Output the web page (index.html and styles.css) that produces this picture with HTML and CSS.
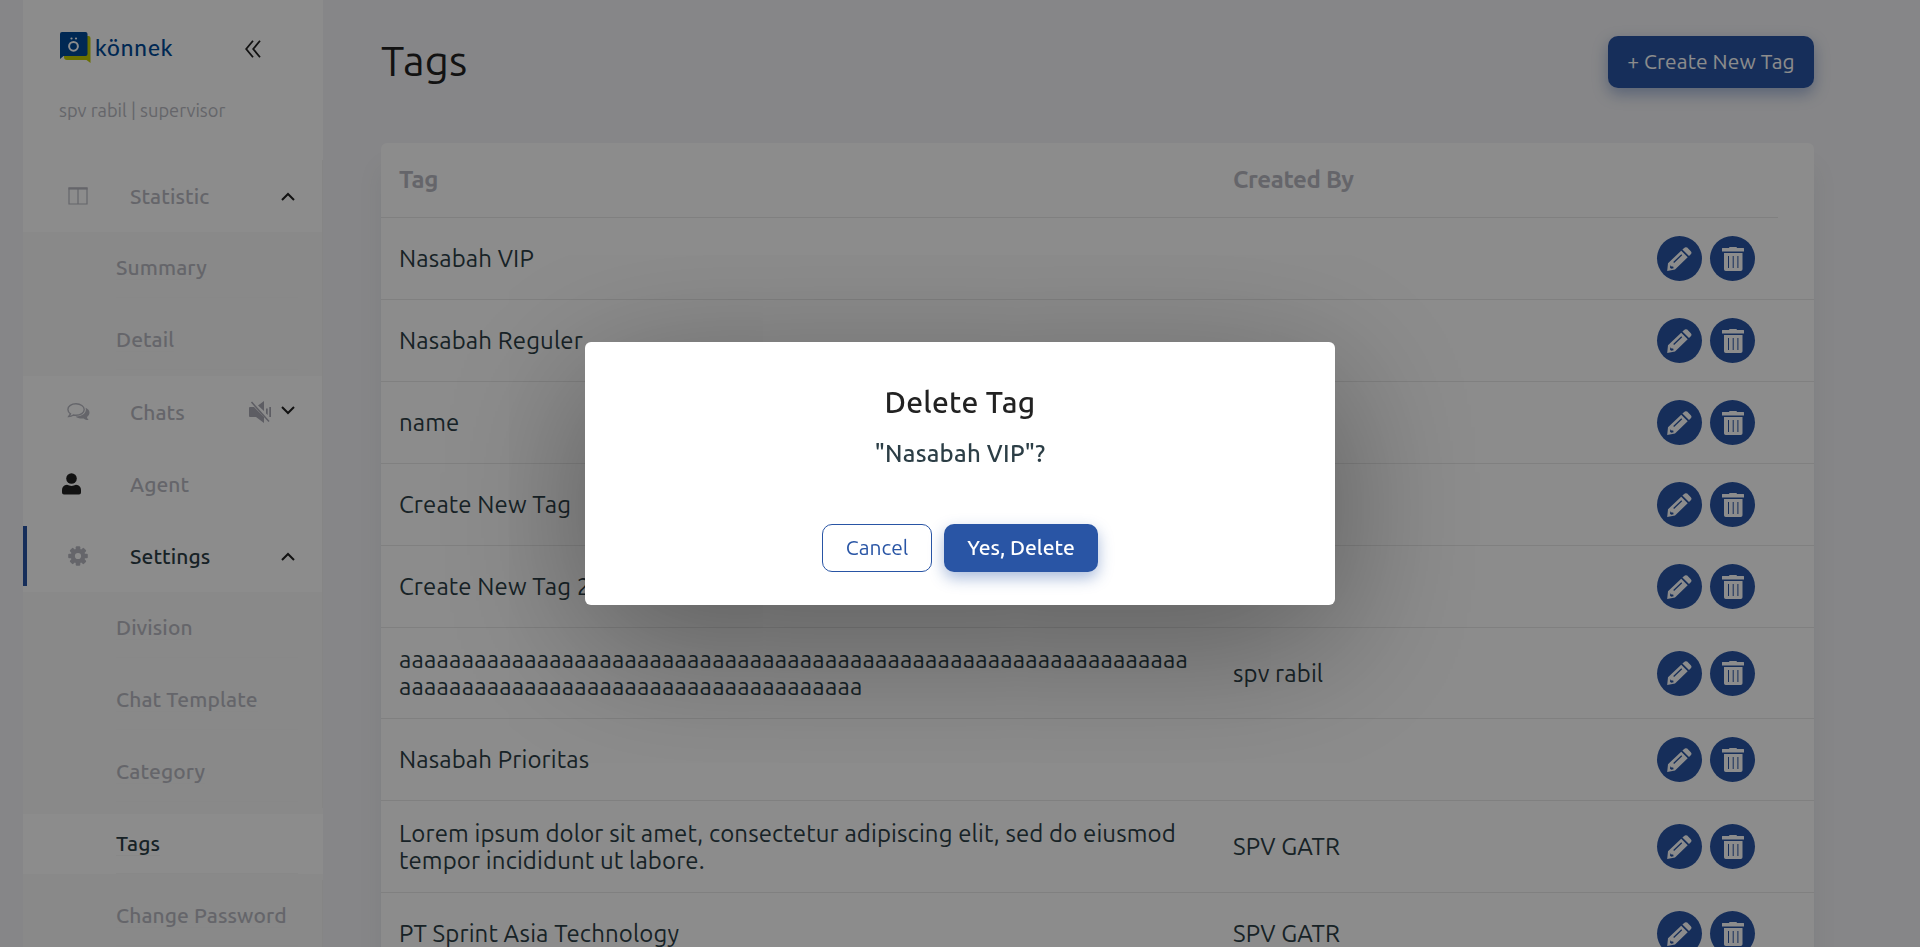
FILE: index.html
```
<!DOCTYPE html>
<html lang="en">
<head>
<meta charset="utf-8">
<title>Tags</title>
<link rel="stylesheet" href="styles.css">
</head>
<body>
<svg class="defs" width="0" height="0" aria-hidden="true">
  <symbol id="pencil" viewBox="0 0 25 24">
    <path fill="currentColor" d="M17.2.9Q18.500-.4 20.200.6L23.800 4.200Q25.200 5.800 23.800 7.200L22 9L15.400 2.500Z"/>
    <path fill="currentColor" fill-rule="evenodd" d="M14.200 3.700L20.700 10.200L8 22.600L.2 24L1 16.200ZM14.300 7.300L6.200 15.100L7.100 16L15.200 8.200ZM3.400 18.200L3 20.700L4.200 21.800L6.600 21.200L6.200 19.600L4.500 19.500Z"/>
  </symbol>
  <symbol id="trash" viewBox="0 0 22 24">
    <path fill="currentColor" fill-rule="evenodd" d="M0 1.300Q0 1 .5 1H7Q7 0 8 0H14Q15 0 15 1H21.500Q22 1 22 1.500V4.500H0ZM2 6H20.500V22.200Q20.500 24 18.700 24H3.800Q2 24 2 22.200ZM6 9V21H7V9ZM10.700 9V21H11.700V9ZM15.400 9V21H16.400V9Z"/>
  </symbol>
  <symbol id="up" viewBox="0 0 14 9"><path d="M1 8L7 2L13 8" fill="none" stroke="currentColor" stroke-width="2"/></symbol>
  <symbol id="down" viewBox="0 0 14 9"><path d="M1 1L7 7L13 1" fill="none" stroke="currentColor" stroke-width="2"/></symbol>
</svg>
<div class="app">
  <aside class="sidebar">
    <div class="brand">
      <svg class="mark" width="32" height="32" viewBox="0 0 32 32">
        <path fill="#c2cc00" d="M5 4H28.500Q30.500 4 30.500 6V31L26.500 28H7Q4 28 4 25Z"/>
        <path fill="#004a98" d="M2 0H25.500Q27.500 0 27.500 2V22Q27.500 24 25.500 24H3.500L0 27V2Q0 0 2 0Z"/>
        <circle cx="13.500" cy="14.300" r="4.400" fill="none" stroke="#fff" stroke-width="2"/>
        <circle cx="11.500" cy="6.500" r="1.100" fill="#fff"/><circle cx="16" cy="6.500" r="1.100" fill="#fff"/>
      </svg>
      <span class="wordmark">könnek</span>
      <svg class="collapse" width="16" height="18" viewBox="0 0 16 18"><path d="M8 .7L1.200 9L8 17.300M15 .7L8.200 9L15 17.300" fill="none" stroke="#222" stroke-width="1.800"/></svg>
    </div>
    <div class="user">spv rabil | supervisor</div>
    <nav class="menu">
      <div class="item"><svg class="ico" width="20" height="18" viewBox="0 0 20 18"><path d="M1 1H19V17H1ZM10 2V17" fill="none" stroke="currentColor" stroke-width="1.200"/><path d="M.5 1.500H19.500" stroke="currentColor" stroke-width="2.200"/></svg><span class="label">Statistic</span><svg class="chev" width="14" height="9"><use href="#up"/></svg></div>
      <div class="sub"><span>Summary</span></div>
      <div class="sub"><span>Detail</span></div>
      <div class="item"><svg class="ico wide" width="23" height="18" viewBox="0 0 23 18"><path d="M9 .8C4.500.8.900 3.200.9 6.500C.9 8.400 2 9.800 3.500 10.900L1.700 13.600C4 13.500 5.300 12.800 6.400 12C7.200 12.200 8.100 12.300 9 12.300C13.600 12.300 17.200 9.700 17.200 6.500S13.600.8 9 .8Z" fill="none" stroke="currentColor" stroke-width="1.400"/><path d="M18.600 4.800C21 5.800 22.500 7.500 22.500 9.600C22.500 11.500 21.600 12.900 20 14C20.200 15.300 20.900 16.200 21.800 17C19.700 17.100 18.100 16.600 16.700 15.500C13.200 15.900 10.300 15.100 8.600 13.500C14.500 13.600 18.900 10.500 18.900 6.500Z" fill="currentColor"/></svg><span class="label">Chats</span><svg class="mute" width="22" height="22" viewBox="0 0 22 22"><path fill="currentColor" d="M1 6H5L15 16V22L7 16H1Q0 16 0 15V7Q0 6 1 6ZM15 0V10L9 4.500ZM17 7.500H18.700V14L17 12.500ZM20.300 6H22V16H20.300Z"/><path d="M2.500 1L20 20.500" stroke="currentColor" stroke-width="1.500"/></svg><svg class="chev chev-down" width="14" height="9"><use href="#down"/></svg></div>
      <div class="item"><svg class="ico person" width="19" height="22" viewBox="0 0 19 22"><circle cx="9.500" cy="5.500" r="5.300"/><path d="M5 11.800Q9.500 14 14 11.800Q19 12.500 19 17V19.500Q19 21.500 17 21.500H2Q0 21.500 0 19.500V17Q0 12.500 5 11.800Z"/></svg><span class="label">Agent</span></div>
      <div class="item active"><svg class="ico" width="20" height="20" viewBox="-10 -10 20 20"><g fill="currentColor"><rect x="-2.300" y="-9.800" width="4.600" height="19.600" rx="1"/><rect x="-2.300" y="-9.800" width="4.600" height="19.600" rx="1" transform="rotate(45)"/><rect x="-2.300" y="-9.800" width="4.600" height="19.600" rx="1" transform="rotate(90)"/><rect x="-2.300" y="-9.800" width="4.600" height="19.600" rx="1" transform="rotate(135)"/><circle r="7.300"/></g><circle r="3.100" fill="#fff"/></svg><span class="label">Settings</span><svg class="chev" width="14" height="9"><use href="#up"/></svg></div>
      <div class="sub"><span>Division</span></div>
      <div class="sub"><span>Chat Template</span></div>
      <div class="sub"><span>Category</span></div>
      <div class="sub current"><span>Tags</span></div>
      <div class="sub"><span>Change Password</span></div>
    </nav>
  </aside>
  <main class="main">
    <header class="head"><h1>Tags</h1><button class="create">+ Create New Tag</button></header>
    <section class="card">
      <div class="thead"><span>Tag</span><span>Created By</span></div>
      <div class="row"><span>Nasabah VIP</span><span></span><div class="acts"><b><svg width="25" height="24"><use href="#pencil"/></svg></b><b><svg width="22" height="24"><use href="#trash"/></svg></b></div></div>
      <div class="row"><span>Nasabah Reguler</span><span></span><div class="acts"><b><svg width="25" height="24"><use href="#pencil"/></svg></b><b><svg width="22" height="24"><use href="#trash"/></svg></b></div></div>
      <div class="row"><span>name</span><span></span><div class="acts"><b><svg width="25" height="24"><use href="#pencil"/></svg></b><b><svg width="22" height="24"><use href="#trash"/></svg></b></div></div>
      <div class="row"><span>Create New Tag</span><span></span><div class="acts"><b><svg width="25" height="24"><use href="#pencil"/></svg></b><b><svg width="22" height="24"><use href="#trash"/></svg></b></div></div>
      <div class="row"><span>Create New Tag 2</span><span></span><div class="acts"><b><svg width="25" height="24"><use href="#pencil"/></svg></b><b><svg width="22" height="24"><use href="#trash"/></svg></b></div></div>
      <div class="row tall"><span class="run">aaaaaaaaaaaaaaaaaaaaaaaaaaaaaaaaaaaaaaaaaaaaaaaaaaaaaaaaaaaaaaa<br>aaaaaaaaaaaaaaaaaaaaaaaaaaaaaaaaaaaaa</span><span>spv rabil</span><div class="acts"><b><svg width="25" height="24"><use href="#pencil"/></svg></b><b><svg width="22" height="24"><use href="#trash"/></svg></b></div></div>
      <div class="row"><span>Nasabah Prioritas</span><span></span><div class="acts"><b><svg width="25" height="24"><use href="#pencil"/></svg></b><b><svg width="22" height="24"><use href="#trash"/></svg></b></div></div>
      <div class="row taller"><span>Lorem ipsum dolor sit amet, consectetur adipiscing elit, sed do eiusmod<br>tempor incididunt ut labore.</span><span>SPV GATR</span><div class="acts"><b><svg width="25" height="24"><use href="#pencil"/></svg></b><b><svg width="22" height="24"><use href="#trash"/></svg></b></div></div>
      <div class="row"><span>PT Sprint Asia Technology</span><span>SPV GATR</span><div class="acts"><b><svg width="25" height="24"><use href="#pencil"/></svg></b><b><svg width="22" height="24"><use href="#trash"/></svg></b></div></div>
    </section>
  </main>
</div>
<div class="mask">
  <div class="modal" role="dialog">
    <h2>Delete Tag</h2>
    <p>"Nasabah VIP"?</p>
    <div class="buttons"><button class="cancel">Cancel</button><button class="yes">Yes, Delete</button></div>
  </div>
</div>
</body>
</html>
```
FILE: styles.css
```
* { box-sizing: border-box; }
html, body { height: 100%; overflow: hidden; }
body { margin: 0; background: #f4f4f7; color: #2c3e46; font-family: "Ubuntu", "Noto Sans", sans-serif; }
button { font-family: inherit; padding: 0; border: 0; white-space: nowrap; }
.defs { display: block; }
.app { display: flex; height: 947px; overflow: hidden; padding-left: 23px; }

.sidebar { width: 300px; flex: none; background: #fff; color: #b8b9c2; }
.brand { display: flex; height: 92px; padding: 32px 0 0 37px; align-items: flex-start; }
.mark { flex: none; }
.wordmark { width: 81px; margin: 1px 0 0 3px; font: 500 22.500px/29px "Lato", sans-serif; letter-spacing: 1px; color: #004a98; white-space: nowrap; }
.collapse { margin: 8px 0 0 69px; }
.user { height: 68px; padding-left: 36px; font-size: 18.250px; line-height: 36px; }
.menu { border-right: 1px solid #f3f3f3; font-size: 21px; letter-spacing: .1px; }
.item { display: flex; align-items: center; height: 72px; padding: 0 27px 0 45px; font-weight: 500; }
.ico { flex: none; margin-right: 42px; }
.wide { margin: 0 40px 0 -1px; }
.person { margin: 0 49px 0 -6px; fill: #222; }
.label { flex: 1; }
.chev { color: #222; }
.chev-down { margin-bottom: 4px; }
.mute { margin-right: 10px; color: #a9a9b5; }
.active { position: relative; color: #2c3e46; }
.active::before { content: ""; position: absolute; left: 0; top: 6px; width: 4px; height: 60px; background: #2955a5; }
.active .ico { color: #b8b9c2; }
.sub { display: flex; align-items: center; height: 72px; padding: 0 0 1px 93px; background: linear-gradient(#f7f7f7, #f7f7f7) 93px 65px / 182px 1px no-repeat #f9f9f9; font-weight: 500; }
.sub span { border-bottom: 1px solid #f7f7f7; }
.current { color: #2c3e46; margin-right: -1px; background: linear-gradient(#f7f7f7, #f7f7f7) 93px 65px / 182px 1px no-repeat, linear-gradient(#fff, #fff) 0 6px / 100% 60px no-repeat #f9f9f9; }

.main { flex: 1; padding: 36px 106px 0 58px; }
.head { display: flex; justify-content: space-between; height: 107px; }
h1 { margin: 0; font-size: 42px; font-weight: 400; line-height: 50px; letter-spacing: .2px; color: #222; }
.create { width: 206px; height: 52px; padding-bottom: 2px; border-radius: 10px; background: #2955a5; color: #fff; font-size: 21px; letter-spacing: .1px; box-shadow: 0 6px 15px rgba(41,85,165,.4); }
.card { width: 1433px; background: #fff; border-radius: 6px; box-shadow: 0 25px 25px rgba(90,110,130,.09); font-size: 24px; line-height: 27px; letter-spacing: .12px; }
.thead { display: grid; grid-template-columns: 834px 1fr; width: 1397px; height: 75px; padding: 0 0 1px 18px; align-items: center; border-bottom: 1px solid #e9e9e9; color: #b8b9c2; font-weight: 700; letter-spacing: -.35px; }
.row { display: grid; grid-template-columns: 834px 424px 1fr; height: 82px; padding-left: 18px; align-items: center; border-bottom: 1px solid #e9e9e9; white-space: nowrap; }
.run { letter-spacing: .19px; }
.tall { height: 91px; }
.taller { height: 92px; }
.acts { display: flex; gap: 8px; }
.acts b { display: flex; width: 45px; height: 45px; align-items: center; justify-content: center; border-radius: 50%; background: #2955a5; color: #fff; }

.mask { position: fixed; inset: 0; display: flex; align-items: center; justify-content: center; background: rgba(0,0,0,.45); }
.modal { width: 750px; height: 263px; padding-top: 38px; border-radius: 6px; background: #fff; text-align: center; box-shadow: 0 35px 150px rgba(0,0,0,.36); }
h2 { margin: 0; font-size: 30px; font-weight: 500; line-height: 44px; letter-spacing: .25px; color: #222; }
.modal p { margin: 12px 0 0; font-size: 24px; font-weight: 500; line-height: 36px; letter-spacing: .25px; }
.buttons { display: flex; justify-content: center; gap: 12px; margin-top: 52px; }
.buttons button { height: 48px; padding-bottom: 2px; border-radius: 10px; font-size: 21px; }
.cancel { width: 110px; border: 1px solid #2955a5; background: #fff; color: #2955a5; }
.yes { width: 154px; background: #2955a5; color: #fff; box-shadow: 0 6px 15px rgba(41,85,165,.4); }
.buttons .yes { font-weight: 500; }
```
